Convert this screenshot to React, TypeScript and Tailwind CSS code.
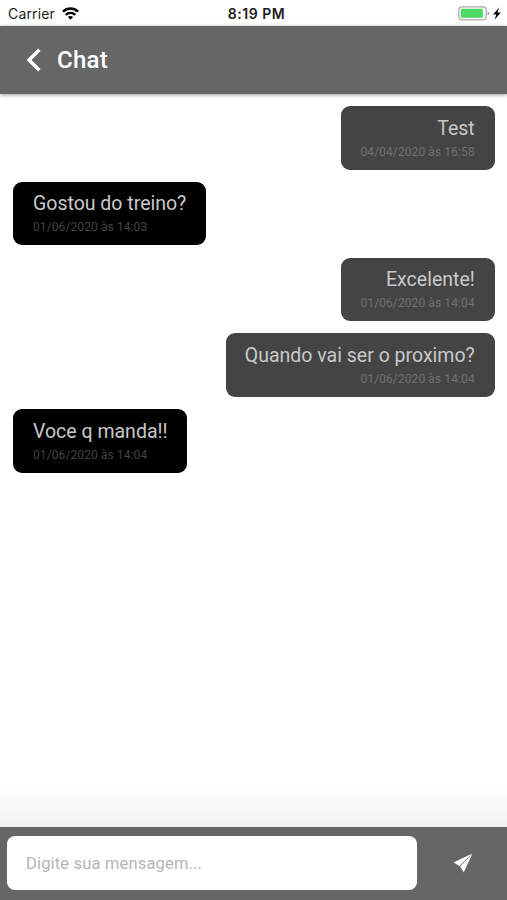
type Message = {
  text: string;
  date: string;
  mine: boolean;
};

const messages: Message[] = [
  { text: 'Test', date: '04/04/2020 às 16:58', mine: true },
  { text: 'Gostou do treino?', date: '01/06/2020 às 14:03', mine: false },
  { text: 'Excelente!', date: '01/06/2020 às 14:04', mine: true },
  { text: 'Quando vai ser o proximo?', date: '01/06/2020 às 14:04', mine: true },
  { text: 'Voce q manda!!', date: '01/06/2020 às 14:04', mine: false },
];

function StatusBar() {
  return (
    <div className="grid h-[25.5px] shrink-0 grid-cols-3 items-center bg-white pr-[5px] pl-2 font-['Inter',sans-serif] text-[#1c1c1c]">
      <div className="flex items-center gap-[7px] pt-0.5">
        <span className="text-[14px] leading-5 tracking-[0.15px]">Carrier</span>
        <svg width="17" height="13" viewBox="0 0 17 13" fill="none" stroke="#000" strokeWidth="2.4">
          <path d="M1 4.6a10.8 10.8 0 0 1 15 0" />
          <path d="M3.7 7.8a7 7 0 0 1 9.6 0" />
          <path d="M8.5 12.7 5.9 10.1a3.8 3.8 0 0 1 5.2 0Z" fill="#000" stroke="none" />
        </svg>
      </div>
      <span className="pt-0.5 pl-[3px] text-center text-[14px] leading-5 font-semibold tracking-[0.5px] whitespace-nowrap">
        8:19 PM
      </span>
      <div className="flex items-center justify-end pt-0.5">
        <svg width="44" height="15" viewBox="0 0 44 15">
          <rect x="0.8" y="0.8" width="27.4" height="13" rx="3.4" fill="#fff" stroke="#aaa" strokeWidth="1.2" />
          <rect x="2.8" y="2.8" width="22" height="9" rx="1" fill="#4cd964" />
          <path d="M29.6 5.2q1.7.6 1.7 2.1t-1.7 2.1Z" fill="#aaa" />
          <path d="M41.2 1.3 35.2 8.4h3.2l-1.8 5.4 6.2-7.2h-3.4Z" fill="#000" />
        </svg>
      </div>
    </div>
  );
}

function Bubble({ text, date, mine }: Message) {
  return (
    <div
      className={
        mine
          ? 'flex h-[63.5px] flex-col items-end self-end rounded-[9px] bg-[#444] pr-[19.75px] pl-[19.25px] pt-[9.5px] text-[#c9c9c9]'
          : 'flex h-[63.5px] flex-col items-start self-start rounded-[9px] bg-black pr-[19.25px] pl-[20.5px] pt-[9.5px] text-[#c9c9c9]'
      }
    >
      <p className="text-[19.5px] leading-[26px] whitespace-nowrap">{text}</p>
      <span
        className={
          mine
            ? 'mt-px text-[12px] leading-[18px] tracking-[0.1px] whitespace-nowrap text-[#707070]'
            : 'mt-px text-[12px] leading-[18px] tracking-[0.1px] whitespace-nowrap text-[#434343]'
        }
      >
        {date}
      </span>
    </div>
  );
}

export default function App() {
  return (
    <div className="flex h-[900px] w-[507px] flex-col overflow-hidden bg-white font-['Roboto',sans-serif]">
      <StatusBar />
      <header className="z-10 flex h-[68px] shrink-0 items-center bg-[#666] pl-[26px] shadow-[0_1px_4px_rgba(0,0,0,0.4)]">
        <svg width="15" height="24" viewBox="0 0 15 24" fill="none" stroke="#fff" strokeWidth="3.4">
          <path d="M13.4 1.7 3 12l10.4 10.3" />
        </svg>
        <h1 className="ml-4 text-[24px] leading-8 font-medium tracking-[0.25px] text-white">Chat</h1>
      </header>
      <main className="flex flex-1 flex-col gap-[12.25px] px-[12.5px] pt-[12.5px]">
        {messages.map((message, index) => (
          <Bubble key={index} {...message} />
        ))}
      </main>
      <div className="h-10 shrink-0 bg-linear-to-b from-white to-[#f1f1f1]" />
      <footer className="flex h-[73.5px] shrink-0 items-center bg-[#666] pl-[7px]">
        <input
          className="h-[54px] w-[410px] rounded-[8px] bg-white px-[19px] text-[16.5px] tracking-[0.17px] outline-none placeholder:text-[#b5b5b5]"
          placeholder="Digite sua mensagem..."
        />
        <button className="flex flex-1 justify-center pl-px">
          <svg width="20" height="20" viewBox="0 0 20 20" fill="#fff">
            <path d="M19.2.6.6 9.4l5.8 3.6Z" />
            <path d="M19.4.8 7.2 13.6l3.5 5.8Z" />
          </svg>
        </button>
      </footer>
    </div>
  );
}
